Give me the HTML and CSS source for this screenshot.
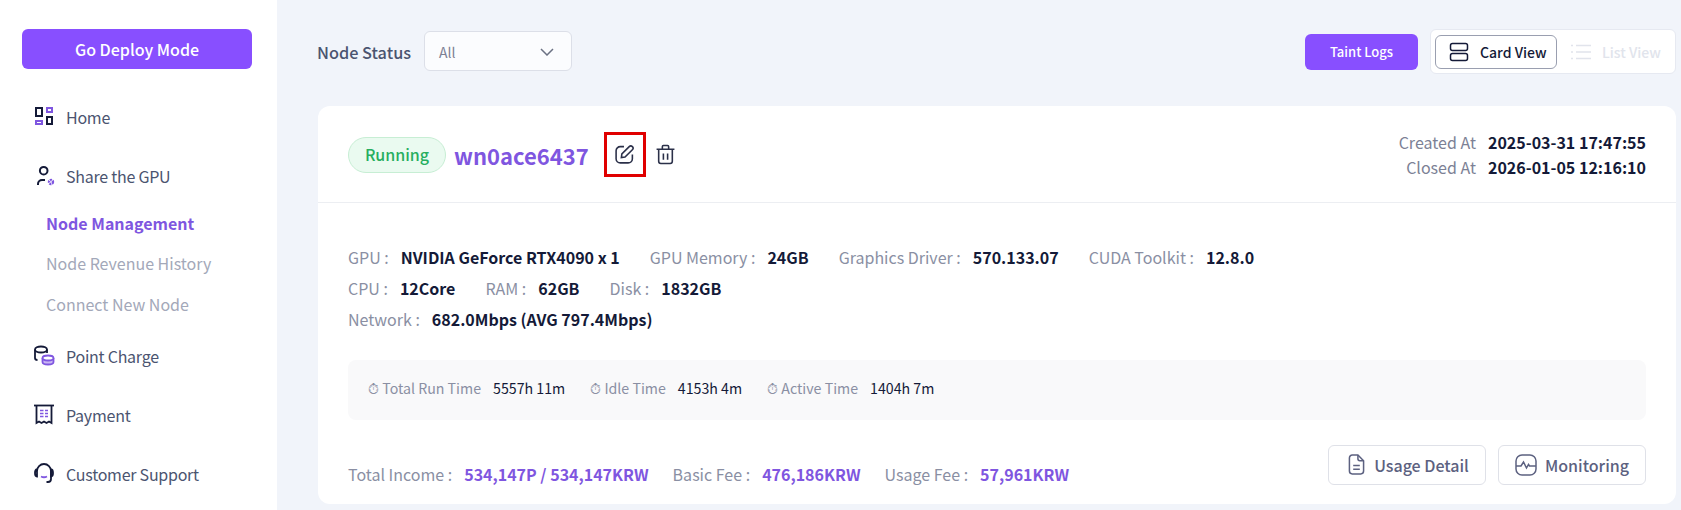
FILE: index.html
```html
<!DOCTYPE html>
<html lang="en">
<head>
<meta charset="utf-8">
<title>Node Management</title>
<link rel="stylesheet" href="styles.css">
</head>
<body>
<div class="app">
  <aside class="sidebar">
    <button class="deploy">Go Deploy Mode</button>
    <nav class="nav">
      <a class="nav-item">
        <svg class="nav-icon" viewBox="0 0 22 22" fill="none" stroke-width="2"><rect x="3" y="2" width="6" height="8" stroke="#141a38"/><rect x="14" y="2" width="5" height="4" stroke="#7f56e0"/><rect x="14" y="11" width="5" height="7" stroke="#141a38"/><rect x="3" y="15" width="6" height="3" stroke="#7f56e0"/></svg>
        <span>Home</span>
      </a>
      <a class="nav-item">
        <svg class="nav-icon" viewBox="0 0 22 22" fill="none" stroke-width="2"><circle cx="10.700" cy="5.700" r="3.800" stroke="#141a38"/><path d="M5 20v-1a4 4 0 0 1 4-4h3" stroke="#141a38"/><circle cx="18" cy="17" r="2" stroke="#7f56e0" stroke-width="2.400" stroke-dasharray="1.800 .7"/></svg>
        <span>Share the GPU</span>
      </a>
      <div class="sub">
        <a class="sub-item active">Node Management</a>
        <a class="sub-item">Node Revenue History</a>
        <a class="sub-item">Connect New Node</a>
      </div>
      <a class="nav-item">
        <svg class="nav-icon" viewBox="0 0 22 22" fill="none" stroke-width="1.800"><ellipse cx="8" cy="4.500" rx="6" ry="3" stroke="#141a38"/><path d="M2 4.500V13c0 1 1 2 2.500 2M14 4.500V8" stroke="#141a38"/><path d="M9.500 13v4c0 1.500 2.500 2.500 5.500 2.500s5.500-1 5.500-2.500v-4" fill="#c9b6f3" stroke="#7f56e0"/><ellipse cx="15" cy="13" rx="5.500" ry="2.500" fill="#fff" stroke="#7f56e0"/></svg>
        <span>Point Charge</span>
      </a>
      <a class="nav-item">
        <svg class="nav-icon" viewBox="0 0 22 22" fill="none" stroke-width="1.800"><path d="M1 1.500h20" stroke="#141a38"/><path d="M3.500 1.500V19l2.500-1.500 2.500 1.500 2.500-1.500 2.500 1.500 2.500-1.500 2.500 1.500V1.500" stroke="#141a38"/><path d="M7 6.500h3.500M12 6.500h3M7 9.500h3.500M12 9.500h3M7 12.500h3.500M12 12.500h3" stroke="#7f56e0" stroke-width="1.500"/></svg>
        <span>Payment</span>
      </a>
      <a class="nav-item">
        <svg class="nav-icon" viewBox="0 0 22 22" fill="none" stroke-width="1.800"><path d="M4 8a7 7 0 0 1 14 0v8a3 3 0 0 1-3 3h-1.500" stroke="#141a38"/><path d="M4 6.500c-1.500 0-2 1-2 3.500s.5 3.500 2 3.500zM18 6.500c1.500 0 2 1 2 3.500s-.5 3.500-2 3.500z" stroke="#141a38"/><path d="M8 13.500c2 1 4 1 6 0" stroke="#7f56e0"/></svg>
        <span>Customer Support</span>
      </a>
    </nav>
  </aside>

  <main class="main">
    <div class="toolbar">
      <span class="status-label">Node Status</span>
      <div class="select">
        <span>All</span>
        <svg class="chevron" viewBox="0 0 14 8" fill="none" stroke="#6b7183" stroke-width="1.500"><path d="M1 1l6 6 6-6"/></svg>
      </div>
      <button class="taint">Taint Logs</button>
      <div class="views">
        <button class="view view-on">
          <svg class="view-icon" viewBox="0 0 20 20" fill="none" stroke="#141a38" stroke-width="1.500"><rect x="1.500" y="1.500" width="17" height="7" rx="2"/><rect x="1.500" y="11.500" width="17" height="7" rx="2"/></svg>
          <span>Card View</span>
        </button>
        <button class="view view-off">
          <svg class="view-icon" viewBox="0 0 20 20" fill="none" stroke="#e1e4ec" stroke-width="1.500"><path d="M5 3.500h15M5 10h15M5 16.500h15M0 3.500h2M0 10h2M0 16.500h2"/></svg>
          <span>List View</span>
        </button>
      </div>
    </div>

    <section class="card">
      <header class="card-head">
        <span class="pill">Running</span>
        <span class="node-name">wn0ace6437</span>
        <span class="edit-box">
          <svg class="act-icon edit-icon" viewBox="0 0 20 20" fill="none" stroke="#2b3049" stroke-width="1.500"><path d="M9.500 2.500H6a4 4 0 0 0-4 4V14a4 4 0 0 0 4 4h7.500a4 4 0 0 0 4-4v-4"/><path d="M7 13l.5-3.500L14.500 2.500a1.500 1.500 0 0 1 3 3L10.500 12.500z"/></svg>
        </span>
        <svg class="act-icon trash" viewBox="0 0 20 20" fill="none" stroke="#2b3049" stroke-width="1.500"><path d="M1.500 5h17M7 5V2.500a1 1 0 0 1 1-1h4a1 1 0 0 1 1 1V5M3.500 5v11.500a2 2 0 0 0 2 2h9a2 2 0 0 0 2-2V5M8 9v6M12 9v6"/></svg>
        <dl class="dates">
          <div class="date-row"><dt>Created At</dt><dd>2025-03-31 17:47:55</dd></div>
          <div class="date-row"><dt>Closed At</dt><dd>2026-01-05 12:16:10</dd></div>
        </dl>
      </header>

      <div class="card-body">
        <div class="specs">
          <div class="spec-row">
            <span class="spec"><span class="k">GPU :</span><b>NVIDIA GeForce RTX4090 x 1</b></span>
            <span class="spec"><span class="k">GPU Memory :</span><b>24GB</b></span>
            <span class="spec"><span class="k">Graphics Driver :</span><b>570.133.07</b></span>
            <span class="spec"><span class="k">CUDA Toolkit :</span><b>12.8.0</b></span>
          </div>
          <div class="spec-row">
            <span class="spec"><span class="k">CPU :</span><b>12Core</b></span>
            <span class="spec"><span class="k">RAM :</span><b>62GB</b></span>
            <span class="spec"><span class="k">Disk :</span><b>1832GB</b></span>
          </div>
          <div class="spec-row">
            <span class="spec"><span class="k">Network :</span><b>682.0Mbps (AVG 797.4Mbps)</b></span>
          </div>
        </div>

        <div class="times">
          <span class="time"><span class="t-k">⏱ Total Run Time</span><span class="t-v">5557h 11m</span></span>
          <span class="time"><span class="t-k">⏱ Idle Time</span><span class="t-v">4153h 4m</span></span>
          <span class="time"><span class="t-k">⏱ Active Time</span><span class="t-v">1404h 7m</span></span>
        </div>

        <div class="foot">
          <span class="fee"><span class="k">Total Income :</span><b>534,147P / 534,147KRW</b></span>
          <span class="fee"><span class="k">Basic Fee :</span><b>476,186KRW</b></span>
          <span class="fee"><span class="k">Usage Fee :</span><b>57,961KRW</b></span>
          <span class="foot-btns">
            <button class="ghost ghost-usage">
              <svg class="doc-icon" viewBox="0 0 18 22" fill="none" stroke="#5c6180" stroke-width="1.600"><path d="M1.500 4a3 3 0 0 1 3-3h6l6 6v11a3 3 0 0 1-3 3h-9a3 3 0 0 1-3-3z"/><path d="M10.500 1v4a2 2 0 0 0 2 2h4M5.500 12h7M5.500 16h7"/></svg>
              <span>Usage Detail</span>
            </button>
            <button class="ghost ghost-monitor">
              <svg class="pulse-icon" viewBox="0 0 22 22" fill="none" stroke="#5c6180" stroke-width="1.500"><rect x="1" y="1" width="20" height="20" rx="6"/><path d="M1 12h5l2.500-4 3 6 2-3.500 1 1.500h6.500"/></svg>
              <span>Monitoring</span>
            </button>
          </span>
        </div>
      </div>
    </section>
  </main>
</div>
</body>
</html>
```

FILE: styles.css
```css
* { box-sizing: border-box; }
html, body { margin: 0; height: 510px; overflow: hidden; }
body {
  font-family: "Noto Sans CJK KR", "Noto Sans", sans-serif;
  background: #f1f4fa;
  color: #141a38;
}
button { font-family: inherit; cursor: pointer; }
.app { display: flex; height: 510px; }

.sidebar {
  width: 277px;
  flex: none;
  background: #fff;
  padding: 29px 25px 0 22px;
}
.deploy {
  display: block;
  width: 230px;
  height: 40px;
  border: 0;
  border-radius: 6px;
  background: #884fff;
  color: #fff;
  font-size: 16px;
  font-weight: 500;
}
.nav { margin-top: 18px; display: flex; flex-direction: column; }
.nav-item {
  display: flex;
  align-items: center;
  height: 59px;
  padding-left: 11px;
  font-size: 16px;
  color: #4b5470;
  letter-spacing: -.25px;
}
.nav-icon { width: 22px; height: 22px; margin-right: 11px; flex: none; }
.sub { display: flex; flex-direction: column; padding-left: 24px; margin: -2px 0 2px; }
.sub-item {
  height: 40.400px;
  line-height: 40px;
  font-size: 16px;
  color: #a3a8b9;
}
.sub-item.active { color: #7f56e0; font-weight: 700; }

.main { flex: 1; min-width: 0; padding: 29px 5px 0 41px; }
.toolbar { display: flex; align-items: center; height: 45px; }
.status-label { font-size: 16.300px; font-weight: 500; color: #4b5470; width: 107px; margin-left: -1px; flex: none; }
.select {
  display: flex;
  align-items: center;
  justify-content: space-between;
  width: 148px;
  height: 40px;
  margin-top: -1px;
  padding: 2px 17px 0 14px;
  background: #fbfcfe;
  border: 1px solid #dcdfe8;
  border-radius: 6px;
  font-size: 14px;
  color: #7c8195;
}
.chevron { width: 14px; height: 8px; }
.taint {
  margin-left: auto;
  width: 113px;
  height: 36px;
  padding-bottom: 2px;
  border: 0;
  border-radius: 6px;
  background: #884fff;
  color: #fff;
  font-size: 13px;
  font-weight: 500;
}
.views {
  display: flex;
  align-items: center;
  width: 246px;
  height: 45px;
  margin-left: 12px;
  padding: 0 4px;
  background: #fff;
  border: 1px solid #e6e9f1;
  border-radius: 6px;
}
.view {
  display: flex;
  align-items: center;
  height: 34px;
  padding: 0;
  background: transparent;
  border: 0;
  font-size: 14px;
  font-weight: 500;
}
.view-on {
  width: 122px;
  padding-left: 13px;
  border: 1px solid #9a9fb0;
  border-radius: 6px;
  color: #141a38;
}
.view-off { padding-left: 14px; color: #e1e4ec; }
.view-icon { width: 20px; height: 20px; margin-right: 11px; }

.card {
  margin-top: 32px;
  height: 398px;
  background: #fff;
  border-radius: 12px;
}
.card-head {
  display: flex;
  align-items: center;
  height: 97px;
  padding: 0 30px;
  border-bottom: 1px solid #eceef2;
}
.pill {
  width: 98px;
  height: 36px;
  margin-top: 1px;
  line-height: 33px;
  text-align: center;
  border: 1px solid #c7eed4;
  border-radius: 18px;
  background: #eafaf0;
  color: #27ae5f;
  font-size: 16px;
  font-weight: 500;
}
.node-name { margin: 1px 0 0 8px; font-size: 22px; font-weight: 700; color: #7f56e0; width: 150px; }
.edit-box {
  display: flex;
  align-items: center;
  justify-content: center;
  width: 42px;
  height: 45px;
  margin-top: 1px;
  padding-right: 2px;
  border: 3px solid #e00000;
}
.act-icon { width: 21px; height: 21px; }
.trash { margin-left: 9px; }
.dates { margin: 1px 0 0 auto; display: flex; flex-direction: column; }
.date-row { display: flex; justify-content: flex-end; height: 25px; line-height: 25px; font-size: 16px; }
.date-row dt { color: #7c8195; }
.date-row dd { margin: 0 0 0 12px; font-weight: 700; color: #141a38; }

.card-body { padding: 0 30px; }
.specs { padding-top: 38px; }
.spec-row { display: flex; height: 31px; line-height: 32px; gap: 30px; font-size: 16px; }
.spec { display: inline-flex; }
.k { color: #8a8fa3; margin-right: 12px; }
.spec b, .fee b { font-weight: 700; }

.times {
  display: flex;
  align-items: center;
  gap: 25px;
  height: 60px;
  margin-top: 26px;
  padding: 0 20px 4px;
  background: #f9f9fa;
  border-radius: 8px;
  font-size: 14.200px;
}
.t-k { color: #8a8fa3; margin-right: 12px; }
.t-v { color: #141a38; }

.foot { display: flex; align-items: center; height: 39px; margin-top: 25px; font-size: 16px; }
.fee { margin-right: 24px; padding-top: 18px; }
.fee b { color: #7f56e0; }
.foot-btns { margin-left: auto; display: flex; gap: 12px; }
.ghost {
  display: flex;
  align-items: center;
  justify-content: center;
  height: 40px;
  background: #fff;
  border: 1px solid #dfe1e8;
  border-radius: 6px;
  color: #5c6180;
  font-size: 16px;
  font-weight: 500;
}
.ghost-usage { width: 158px; padding: 0 0 0 3px; }
.ghost-monitor { width: 148px; padding: 0; }
.doc-icon { width: 17px; height: 21px; margin-right: 9px; }
.pulse-icon { width: 22px; height: 22px; margin-right: 8px; }
```
